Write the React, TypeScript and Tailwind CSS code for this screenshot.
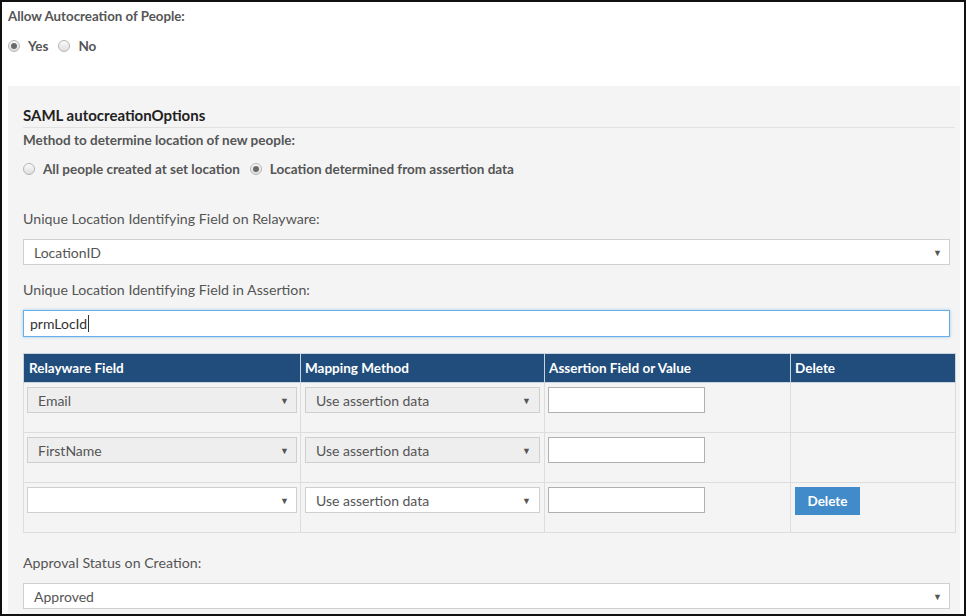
import React from 'react';

const Radio: React.FC<{ checked?: boolean; label: string }> = ({ checked, label }) => (
  <label className="flex items-center gap-[8px] mr-[10px]">
    <span className="flex items-center justify-center w-[12px] h-[12px] rounded-full border border-[#b5b5b5] bg-gradient-to-b from-[#fafafa] to-[#dedede]">
      {checked && <span className="w-[6px] h-[6px] rounded-full bg-[#6a6a6a]" />}
    </span>
    <span>{label}</span>
  </label>
);

const Arrow = () => <span className="text-[9px] text-[#555] leading-none">▼</span>;

const Select: React.FC<{ value: string; disabled?: boolean; className?: string }> = ({ value, disabled, className }) => (
  <div
    className={`flex items-center justify-between border border-[#cfcfcf] pl-[10px] pr-[7px] text-[14px] text-[#555] ${
      disabled ? 'bg-[#eeeeee]' : 'bg-white'
    } ${className ?? ''}`}
  >
    <span>{value}</span>
    <Arrow />
  </div>
);

const rows = [
  { field: 'Email', disabled: true, del: false },
  { field: 'FirstName', disabled: true, del: false },
  { field: '', disabled: false, del: true },
];

export default function App() {
  return (
    <div
      className="w-[966px] h-[616px] border-2 border-[#111] bg-white overflow-hidden text-[#555]"
      style={{ fontFamily: 'Lato, "Open Sans", sans-serif' }}
    >
      <div className="pl-[6px] pt-[4px]">
        <div className="h-[20px] leading-[20px] text-[13.3px] font-bold">Allow Autocreation of People:</div>
        <div className="flex mt-[10px] h-[20px] text-[13.5px] font-bold">
          <Radio checked label="Yes" />
          <Radio label="No" />
        </div>
      </div>

      <div className="ml-[6px] mt-[30px] w-[952px] bg-[#f4f4f4] px-[15px] pt-[18px] pb-[20px]">
        <div className="h-[24px] leading-[22px] border-b border-[#e2e2e2] -mr-[10px] text-[15px] font-bold text-[#222]">
          SAML autocreationOptions
        </div>
        <div className="mt-[3px] h-[18px] leading-[18px] text-[13.5px] font-bold">
          Method to determine location of new people:
        </div>
        <div className="flex mt-[10px] h-[20px] text-[13.5px] font-bold">
          <Radio label="All people created at set location" />
          <Radio checked label="Location determined from assertion data" />
        </div>

        <div className="mt-[30px] h-[20px] leading-[20px] text-[14.2px]">
          Unique Location Identifying Field on Relayware:
        </div>
        <Select value="LocationID" className="mt-[10px] h-[26px] w-[927px] text-[#333]" />

        <div className="mt-[15px] h-[20px] leading-[20px] text-[14.2px]">
          Unique Location Identifying Field in Assertion:
        </div>
        <div className="mt-[10px] h-[27px] w-[927px] flex items-center bg-white border border-[#66afe9] shadow-[0_0_3px_rgba(102,175,233,0.6)] pl-[6px] text-[14px] text-[#333]">
          prmLocId<span className="ml-[1px] w-px h-[17px] bg-[#333]" />
        </div>

        <table className="mt-[16px] w-[932px] border-collapse table-fixed text-[13.5px]">
          <colgroup>
            <col className="w-[277px]" />
            <col className="w-[244px]" />
            <col className="w-[246px]" />
            <col className="w-[165px]" />
          </colgroup>
          <thead>
            <tr className="h-[29px] bg-[#214d7c] text-white font-bold text-left">
              <th className="px-[5px] border border-[#c9d3de]">Relayware Field</th>
              <th className="px-[4px] border border-[#c9d3de]">Mapping Method</th>
              <th className="px-[4px] border border-[#c9d3de]">Assertion Field or Value</th>
              <th className="px-[4px] border border-[#c9d3de]">Delete</th>
            </tr>
          </thead>
          <tbody>
            {rows.map((r, i) => (
              <tr key={i} className="h-[50px] align-top">
                <td className="border border-[#dddddd] pt-[4px] px-[3px]">
                  <Select value={r.field} disabled={r.disabled} className="h-[26px] pr-[6px]" />
                </td>
                <td className="border border-[#dddddd] pt-[4px] px-[4px]">
                  <Select value="Use assertion data" disabled={r.disabled} className="h-[26px] pr-[8px]" />
                </td>
                <td className="border border-[#dddddd] pt-[4px] px-[3px]">
                  <div className="h-[26px] w-[157px] bg-white border border-[#b0b0b0]" />
                </td>
                <td className="border border-[#dddddd] pt-[4px] px-[4px]">
                  {r.del && (
                    <button className="h-[28px] w-[65px] bg-[#428bca] text-white font-bold text-[13.5px]">Delete</button>
                  )}
                </td>
              </tr>
            ))}
          </tbody>
        </table>

        <div className="mt-[20px] h-[20px] leading-[20px] text-[14.2px]">Approval Status on Creation:</div>
        <Select value="Approved" className="mt-[10px] h-[26px] w-[927px] text-[#333]" />
      </div>
    </div>
  );
}
